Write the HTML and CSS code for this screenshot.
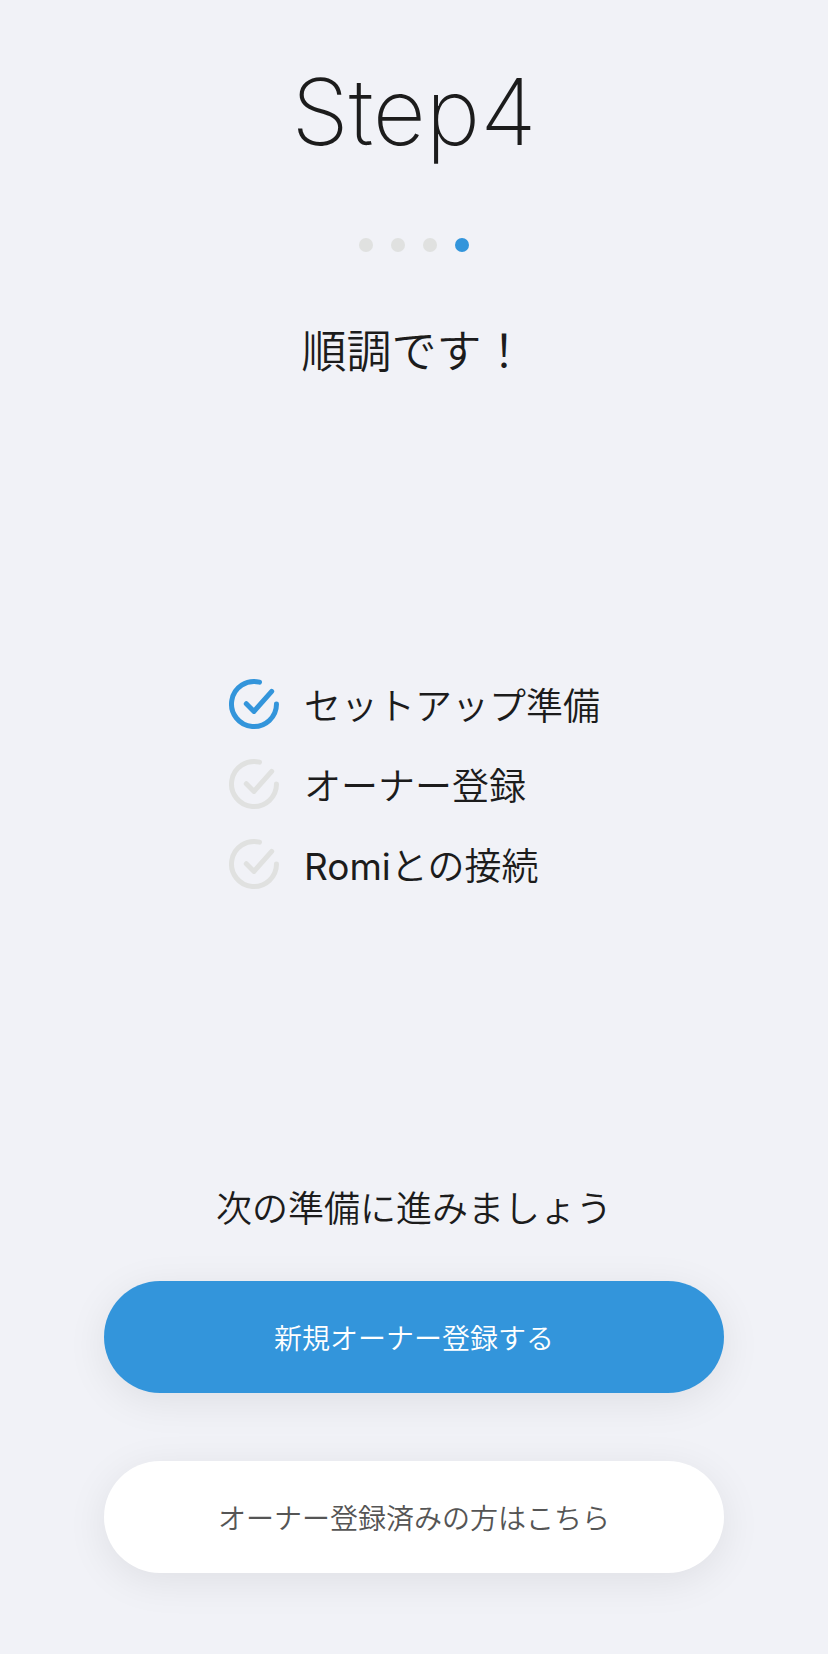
FILE: index.html
```html
<!DOCTYPE html>
<html lang="ja">
<head>
<meta charset="utf-8">
<meta name="viewport" content="width=device-width, initial-scale=1">
<title>Step4</title>
<link rel="stylesheet" href="styles.css">
</head>
<body>
<main class="page">
  <header class="head">
    <h1 class="title">Step4</h1>
    <div class="dots" role="img" aria-label="4 / 4">
      <span class="dot"></span><span class="dot"></span><span class="dot"></span><span class="dot dot-active"></span>
    </div>
    <h2 class="subtitle">順調です！</h2>
  </header>
  <ul class="checklist">
    <li class="item"><svg class="check check-done" viewBox="0 0 52 52" aria-hidden="true"><path d="M31.500 4.200A22.500 22.500 0 1 0 48.500 26"/><path d="M18.300 25.700l7.700 7.700L43.700 13.300"/></svg><span>セットアップ準備</span></li>
    <li class="item"><svg class="check" viewBox="0 0 52 52" aria-hidden="true"><path d="M31.500 4.200A22.500 22.500 0 1 0 48.500 26"/><path d="M18.300 25.700l7.700 7.700L43.700 13.300"/></svg><span>オーナー登録</span></li>
    <li class="item"><svg class="check" viewBox="0 0 52 52" aria-hidden="true"><path d="M31.500 4.200A22.500 22.500 0 1 0 48.500 26"/><path d="M18.300 25.700l7.700 7.700L43.700 13.300"/></svg><span><span class="latin">Romi</span>との接続</span></li>
  </ul>
  <footer class="actions">
    <p class="prompt">次の準備に進みましょう</p>
    <button class="button button-primary" type="button">新規オーナー登録する</button>
    <button class="button button-plain" type="button">オーナー登録済みの方はこちら</button>
  </footer>
</main>
</body>
</html>
```
FILE: styles.css
```css
* { box-sizing: border-box; }

body {
  margin: 0;
  background: #f1f2f7;
  color: #1c1c1c;
  font-family: Inter, "Noto Sans CJK JP", sans-serif;
  font-weight: 350;
}

.page {
  min-height: 100vh;
  padding: 56px 104px 81px;
  display: flex;
  flex-direction: column;
  justify-content: space-between;
}

.head {
  display: flex;
  flex-direction: column;
  align-items: center;
}

.title {
  margin: 0;
  font-size: 92px;
  line-height: 112px;
  font-weight: 200;
}

.dots {
  display: flex;
  gap: 18px;
  margin-top: 70px;
}

.dot {
  width: 14px;
  height: 14px;
  border-radius: 50%;
  background: #e0e1e0;
}

.dot-active { background: #3395db; }

.subtitle {
  margin: 68px 0 0;
  font-size: 45px;
  line-height: 64px;
  font-weight: inherit;
}

.checklist {
  align-self: center;
  margin: 0;
  padding: 0;
  list-style: none;
}

.item {
  display: flex;
  align-items: center;
  gap: 24px;
  height: 80px;
  font-size: 37px;
}

.latin { font-weight: 400; }

.check {
  width: 52px;
  height: 52px;
  fill: none;
  stroke: #e0e1e0;
  stroke-width: 5;
  stroke-linecap: round;
  stroke-linejoin: round;
}

.check-done { stroke: #3395db; }

.actions {
  display: flex;
  flex-direction: column;
}

.prompt {
  margin: 0 0 46px;
  font-size: 36px;
  line-height: 52px;
  text-align: center;
}

.button {
  height: 112px;
  border: 0;
  border-radius: 56px;
  font: inherit;
  font-size: 28px;
  box-shadow: 0 8px 40px rgba(0, 0, 0, 0.08);
}

.button-primary {
  margin-bottom: 68px;
  background: #3395db;
  color: #fff;
}

.button-plain {
  background: #fff;
  color: #555;
}
```
